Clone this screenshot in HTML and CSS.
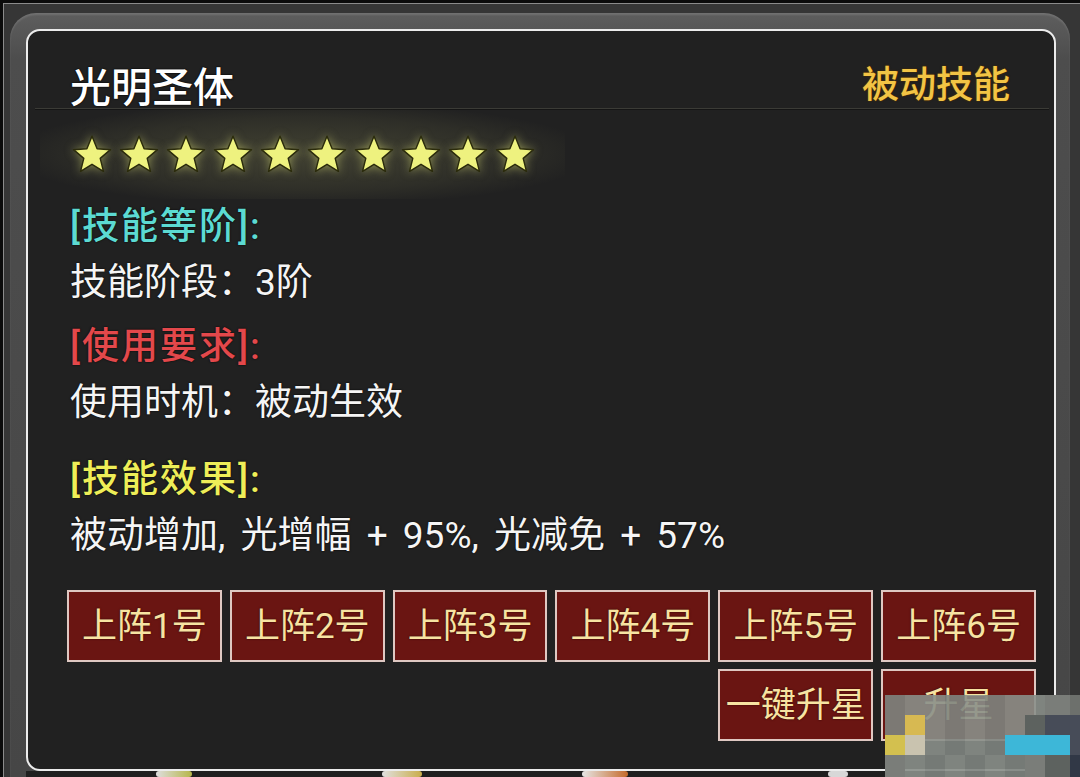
FILE: index.html
```html
<!DOCTYPE html>
<html lang="zh-CN">
<head>
<meta charset="utf-8">
<title>光明圣体</title>
<link rel="stylesheet" href="styles.css">
</head>
<body>
<svg class="sprite" aria-hidden="true">
  <symbol id="star" viewBox="0 0 36 36">
    <polygon points="18,2 22.6,13.2 34.6,14.1 25.4,21.9 28.3,33.6 18,27.3 7.7,33.6 10.6,21.9 1.4,14.1 13.4,13.2"/>
  </symbol>
</svg>
<div class="screen">
  <div class="bezel">
    <div class="frame">
      <section class="panel">
        <header class="header">
          <h1 class="title">光明圣体</h1>
          <span class="kind">被动技能</span>
        </header>

        <div class="stars">
          <svg class="star"><use href="#star"/></svg>
          <svg class="star"><use href="#star"/></svg>
          <svg class="star"><use href="#star"/></svg>
          <svg class="star"><use href="#star"/></svg>
          <svg class="star"><use href="#star"/></svg>
          <svg class="star"><use href="#star"/></svg>
          <svg class="star"><use href="#star"/></svg>
          <svg class="star"><use href="#star"/></svg>
          <svg class="star"><use href="#star"/></svg>
          <svg class="star"><use href="#star"/></svg>
        </div>

        <div class="info">
          <div class="block">
            <div class="label label-grade">[技能等阶]:</div>
            <div class="line">技能阶段：3阶</div>
          </div>
          <div class="block block-use">
            <div class="label label-use">[使用要求]:</div>
            <div class="line">使用时机：被动生效</div>
          </div>
          <div class="block block-effect">
            <div class="label label-effect">[技能效果]:</div>
            <div class="line line-effect">被动增加, 光增幅 + 95%, 光减免 + 57%</div>
          </div>
        </div>

        <div class="actions">
          <button class="btn">上阵1号</button>
          <button class="btn">上阵2号</button>
          <button class="btn">上阵3号</button>
          <button class="btn">上阵4号</button>
          <button class="btn">上阵5号</button>
          <button class="btn">上阵6号</button>
          <button class="btn btn-col5">一键升星</button>
          <button class="btn">升星</button>
        </div>
      </section>
      <div class="dock">
        <span class="dock-icon dock-a"></span>
        <span class="dock-icon dock-b"></span>
        <span class="dock-icon dock-c"></span>
        <span class="dock-icon dock-d"></span>
      </div>
    </div>
  </div>

  <div class="mosaic" aria-hidden="true">
    <i class="m g1"></i><i class="m g2"></i><i class="m g2"></i><i class="m g1"></i><i class="m g2"></i><i class="m g1"></i><i class="m g2"></i><i class="m g2"></i><i class="m g3"></i><i class="m g4"></i>
    <i class="m g1"></i><i class="m y1"></i><i class="m g2"></i><i class="m g1"></i><i class="m g2"></i><i class="m g1"></i><i class="m g2"></i><i class="m d1"></i><i class="m d2"></i><i class="m d2"></i>
    <i class="m y2"></i><i class="m b1"></i><i class="m g2"></i><i class="m g1"></i><i class="m g2"></i><i class="m g1"></i><i class="m c1"></i><i class="m c1"></i><i class="m c1"></i><i class="m d2"></i>
    <i class="m g3"></i><i class="m g2"></i><i class="m g1"></i><i class="m g2"></i><i class="m g1"></i><i class="m g2"></i><i class="m g1"></i><i class="m g3"></i><i class="m d1"></i><i class="m d3"></i>
  </div>
</div>
</body>
</html>
```
FILE: styles.css
```css
html, body {
  margin: 0;
  padding: 0;
}

body {
  width: 1080px;
  height: 777px;
  overflow: hidden;
  background: #151515;
  font-family: Roboto, "Noto Sans CJK SC", sans-serif;
  color: #f4f4f4;
}

.sprite {
  position: absolute;
  width: 0;
  height: 0;
  overflow: hidden;
}

/* outer window chrome */
.screen {
  position: relative;
  height: 777px;
  box-sizing: border-box;
  border-top: 3px solid #0b0b0b;
  border-left: 3px solid #0b0b0b;
}

.bezel {
  height: 100%;
  box-sizing: border-box;
  border-top: 1px solid #8b8b8b;
  border-left: 1px solid #8b8b8b;
  background: #363636;
  padding: 9px 10px 0 6px;
}

.frame {
  height: 100%;
  box-sizing: border-box;
  border-radius: 26px 26px 0 0;
  background: linear-gradient(180deg, #5e5e5e 0%, #4d4d4d 6%, #464646 100%);
  box-shadow: inset 0 2px 2px rgba(255, 255, 255, 0.12);
  padding: 16px 14px 0 16px;
}

/* the dark tooltip card */
.panel {
  height: 742px;
  box-sizing: border-box;
  border: 2px solid #ececec;
  border-radius: 14px;
  background: #212121;
  display: flex;
  flex-direction: column;
}

.header {
  display: flex;
  justify-content: space-between;
  align-items: flex-end;
  margin: 0 5px 0 7px;
  padding: 35px 39px 0 35px;
  border-bottom: 1px solid #3b3b36;
  box-shadow: 0 1px 0 rgba(0, 0, 0, 0.35);
}

.title {
  margin: 0;
  font-size: 41px;
  line-height: 40px;
  font-weight: 500;
  color: #ffffff;
  text-shadow: 0 0 2px #000, 0 0 1px #000;
}

.kind {
  font-size: 37px;
  line-height: 40px;
  font-weight: 500;
  color: #f2c445;
  text-shadow: 0 0 2px #4a2c00, 0 0 1px #6a4000;
  padding-bottom: 2px;
}

/* star rating with a soft halo */
.stars {
  align-self: flex-start;
  display: flex;
  gap: 7px;
  margin-left: 12px;
  padding: 25px 30px 25px 32px;
  background: radial-gradient(ellipse 56% 58% at 50% 50%, rgba(200, 200, 120, 0.2), rgba(200, 200, 120, 0.08) 70%, rgba(200, 200, 120, 0) 100%);
}

.star {
  width: 40px;
  height: 40px;
  fill: #eef27f;
  stroke: #2b2b0c;
  stroke-width: 1.3;
  stroke-linejoin: round;
  filter: drop-shadow(0 0 5px rgba(225, 230, 120, 0.5));
}

.info {
  padding-left: 42px;
}

.label,
.line {
  font-size: 37px;
  line-height: 56px;
  white-space: nowrap;
  text-shadow: 0 0 2px #000;
}

.label {
  font-weight: 500;
  letter-spacing: 2px;
}

.line {
  color: #f5f5f5;
}

.line-effect {
  word-spacing: 6px;
}

.label-grade {
  color: #5cdad2;
}

.label-use {
  color: #e3484b;
}

.label-effect {
  color: #eeee58;
}

.block-use {
  margin-top: 8px;
}

.block-effect {
  margin-top: 21px;
}

/* action buttons */
.actions {
  display: grid;
  grid-template-columns: repeat(6, 1fr);
  grid-auto-rows: 72px;
  gap: 7px 8px;
  width: 969px;
  margin: 26px 0 0 39px;
}

.btn {
  box-sizing: border-box;
  margin: 0;
  padding: 0;
  border: 2px solid #dfc8c2;
  background: #6a1512;
  color: #f7e3a2;
  font-family: Roboto, "Noto Sans CJK SC", sans-serif;
  font-size: 35px;
  line-height: 1;
  text-shadow: 0 0 2px #2a0000;
}

.btn-col5 {
  grid-column: 5;
}

/* strip of the scene under the card */
.dock {
  height: 20px;
  display: flex;
  align-items: flex-start;
  background: #1f1f1f;
}

.dock-icon {
  height: 6px;
  border-radius: 3px;
}

.dock-a {
  width: 36px;
  margin-left: 130px;
  background: linear-gradient(90deg, #dedede, #b6b64a);
}

.dock-b {
  width: 40px;
  margin-left: 190px;
  background: linear-gradient(90deg, #e0e0e0, #c9ad4a);
}

.dock-c {
  width: 46px;
  margin-left: 160px;
  background: linear-gradient(90deg, #e6e6e6, #c56a2a);
}

.dock-d {
  width: 20px;
  margin-left: 200px;
  background: #d8d8d8;
}

/* pixelated patch in the corner */
.mosaic {
  position: absolute;
  right: 0;
  bottom: 0;
  width: 195px;
  height: 82px;
  display: grid;
  grid-template-columns: 20px 20px 20px 20px 20px 20px 20px 20px 25px 10px;
  grid-template-rows: 20px 20px 20px 22px;
}

.m { display: block; }
.g1 { background: rgba(126, 132, 127, 0.9); }
.g2 { background: rgba(138, 143, 138, 0.9); }
.g3 { background: #7a7d79; }
.g4 { background: #6d706c; }
.y1 { background: #d7b952; }
.y2 { background: #d3c04f; }
.b1 { background: #c9c3af; }
.c1 { background: #3db7d8; }
.d1 { background: #5d625f; }
.d2 { background: #474c58; }
.d3 { background: #313846; }
```
